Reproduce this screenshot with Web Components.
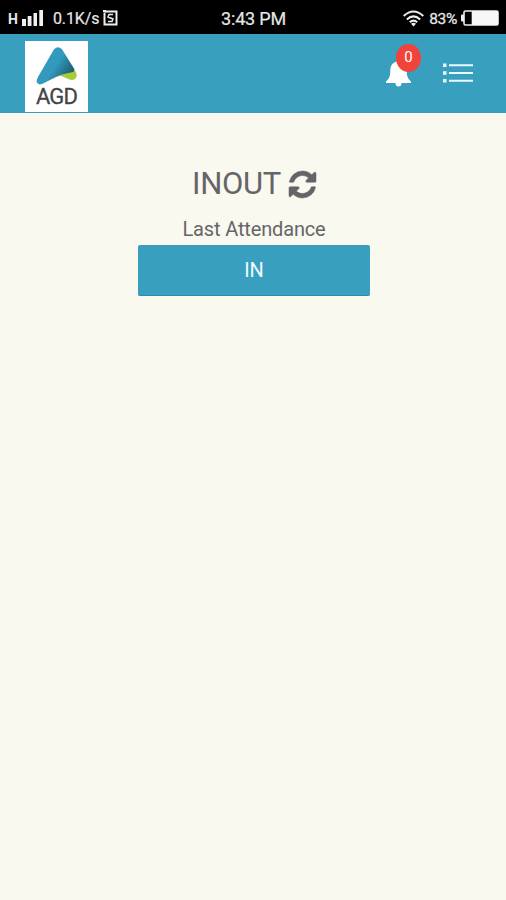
<!DOCTYPE html>
<html lang="en">
<head>
<meta charset="utf-8">
<meta name="viewport" content="width=device-width, initial-scale=1">
<title>INOUT</title>
<style>
  :root {
    --brand: #389fbe;
    --page: #faf9f0;
    --ink: #656568;
  }
  body {
    margin: 0;
    background: var(--page);
    font-family: Roboto, "Liberation Sans", sans-serif;
  }
</style>
</head>
<body>
<attendance-app>
  <status-bar slot="status" speed="0.1K/s" time="3:43 PM" battery="83%"></status-bar>
  <app-header slot="header" count="0">AGD</app-header>
  <attendance-panel label="Last Attendance" action="IN">INOUT</attendance-panel>
</attendance-app>

<script>
class AttendanceApp extends HTMLElement {
  constructor() {
    super();
    this.attachShadow({ mode: 'open' });
    this.shadowRoot.innerHTML = /* html */ `
      <style>
        :host {
          display: flex;
          flex-direction: column;
          min-height: 100vh;
          background: var(--page);
        }
        main { flex: 1; }
      </style>
      <slot name="status"></slot>
      <slot name="header"></slot>
      <main><slot></slot></main>
    `;
  }
}

const STATUS_STYLE = /* css */ `
  :host {
    display: grid;
    grid-template-columns: 1fr auto 1fr;
    align-items: center;
    height: 34px;
    padding: 2px 7px 0 8px;
    box-sizing: border-box;
    background: #000;
    color: #e6e6e6;
    font-size: 16px;
    line-height: 20px;
    white-space: nowrap;
  }
  .side { display: flex; align-items: center; }
  .right { justify-content: flex-end; }
  .net { font-size: 14px; font-weight: 700; padding-top: 2px; }
  .bars { margin: 0 10px 0 4px; }
  .speed { letter-spacing: -0.1px; margin-right: 4px; padding-top: 1px; -webkit-text-stroke: 0.2px; }
  .time { font-size: 18px; letter-spacing: -0.2px; padding-top: 1px; -webkit-text-stroke: 0.2px; }
  .wifi { margin-right: 5px; }
  .battery { font-size: 15.5px; letter-spacing: -0.3px; margin-right: 4px; padding-top: 1px; -webkit-text-stroke: 0.3px; }
  svg { display: block; flex: none; }
`;

class StatusBar extends HTMLElement {
  constructor() {
    super();
    this.attachShadow({ mode: 'open' });
    this.shadowRoot.innerHTML = /* html */ `
      <style>${STATUS_STYLE}</style>
      <div class="side">
        <span class="net">H</span>
        <svg class="bars" width="21" height="16" viewBox="0 0 21 16" fill="#f0f0f0">
          <path d="M0 9h4v7H0zM5.700 6h3.800v10H5.700zM11.500 3H15v13h-3.500zM17.300 0H21v16h-3.700z"/>
        </svg>
        <span class="speed"></span>
        <svg width="15" height="16" viewBox="0 0 15 16" fill="none" stroke="#eee">
          <path d="M2 1.500h11.500v13H1.500V2.500" stroke-width="2"/>
          <path d="M0 1h3" stroke-width="2"/>
          <path d="M10 4.500H6L5 7l5 2-1 2.500H5" stroke-width="1.500"/>
        </svg>
      </div>
      <span class="time"></span>
      <div class="side right">
        <svg class="wifi" width="21" height="17" viewBox="0 0 21 17" fill="none" stroke="#eee" stroke-width="2">
          <path d="M.7 6Q10.500-3 20.300 6M3.800 9.400Q10.500 3.300 17.200 9.400M6.800 12.300Q10.500 9 14.200 12.300"/>
          <path d="M8 13.700Q10.500 11.700 13 13.700L10.500 16.500z" fill="#eee" stroke="none"/>
        </svg>
        <span class="battery"></span>
        <svg width="38" height="16" viewBox="0 0 38 16">
          <path d="M3 4.500H1Q0 4.500 0 5.500v5q0 1 1 1h2z" fill="#eee"/>
          <rect x="3" y="1" width="34" height="14" rx="1.500" fill="none" stroke="#eee" stroke-width="1.600"/>
          <path d="M10.700 1H37v14H10.700z" fill="#f7f7f7"/>
        </svg>
      </div>
    `;
  }

  connectedCallback() {
    for (const name of ['speed', 'time', 'battery']) {
      this.shadowRoot.querySelector('.' + name).textContent = this.getAttribute(name) || '';
    }
  }
}

const HEADER_STYLE = /* css */ `
  :host {
    display: flex;
    align-items: flex-start;
    justify-content: space-between;
    height: 79px;
    padding: 7px 33px 0 25px;
    box-sizing: border-box;
    background: var(--brand);
  }
  .logo {
    display: flex;
    flex-direction: column;
    align-items: center;
    width: 63px;
    height: 71px;
    padding-top: 6px;
    box-sizing: border-box;
    background: #fff;
    color: #454547;
    font-size: 22px;
    line-height: 26px;
    letter-spacing: -0.9px;
    -webkit-text-stroke: 0.3px;
  }
  .logo svg { margin-bottom: -1px; }
  .tools { display: flex; gap: 32px; padding-top: 18px; }
  .bell { position: relative; width: 25px; height: 28px; }
  .badge {
    position: absolute;
    left: 10px;
    top: -15px;
    width: 25px;
    height: 28px;
    border-radius: 50%;
    background: #f0433a;
    color: #fff;
    font-size: 15px;
    line-height: 27px;
    text-align: center;
  }
  .menu { margin-top: 4px; }
  svg { display: block; }
`;

class AppHeader extends HTMLElement {
  constructor() {
    super();
    this.attachShadow({ mode: 'open' });
    this.shadowRoot.innerHTML = /* html */ `
      <style>${HEADER_STYLE}</style>
      <div class="logo">
        <svg width="41" height="38" viewBox="0 0 41 38">
          <defs>
            <linearGradient id="peak" gradientUnits="userSpaceOnUse" x1="21" y1="16" x2="36" y2="26">
              <stop offset="0" stop-color="#329bbd"/>
              <stop offset="1" stop-color="#1f5a70"/>
            </linearGradient>
          </defs>
          <path d="M24 28.500L37.500 22Q41.500 25.500 40.500 29.500Q39 34 33.500 32.500Z" fill="#a6cc38"/>
          <path d="M18 2.300Q22-2 26 2.300L38 21.500Q39.500 25 34.500 25.500Q27 26.500 20 30L6 37Q2 38.500 .7 35Q.3 33 2 30Z" fill="url(#peak)"/>
        </svg>
        <slot></slot>
      </div>
      <div class="tools">
        <div class="bell">
          <svg width="25" height="28" viewBox="0 0 25 28" fill="#fff">
            <path d="M10.500 2.500a2 2 0 0 1 4 0C19 4 20.700 7 20.700 11.500C20.700 17.500 22 20 25 22.500V24H0v-1.500C3 20 4.300 17.500 4.300 11.500C4.300 7 6 4 10.500 2.500zM9.500 24h6a3 3.500 0 0 1-6 0z"/>
          </svg>
          <span class="badge"></span>
        </div>
        <svg class="menu" width="30" height="20" viewBox="0 0 30 20" fill="#e9fbff">
          <path d="M0 .5h3.500V4H0zM0 8.300h3.500v3.500H0zM0 16h3.500v3.500H0zM6 1.300h24v2H6zM6 9h24v2H6zM6 16.800h24v2H6z"/>
        </svg>
      </div>
    `;
  }

  connectedCallback() {
    this.shadowRoot.querySelector('.badge').textContent = this.getAttribute('count') || '0';
  }
}

const PANEL_STYLE = /* css */ `
  :host {
    display: flex;
    flex-direction: column;
    align-items: center;
    padding: 52px 0 0 2px;
    color: var(--ink);
  }
  h1 {
    display: flex;
    align-items: center;
    gap: 8px;
    margin: 0;
    font-size: 31px;
    font-weight: 400;
    line-height: 38px;
    letter-spacing: -0.3px;
  }
  h1 svg { overflow: visible; }
  .label {
    margin: 14px 0 4px;
    font-size: 20px;
    line-height: 24px;
    letter-spacing: -0.15px;
  }
  button {
    width: 232px;
    height: 51px;
    padding: 0 0 1px;
    border: 0;
    border-bottom: 1px solid #2b8dac;
    border-radius: 2px;
    background: var(--brand);
    color: #eefaff;
    font: 400 20px Roboto, "Liberation Sans", sans-serif;
  }
`;

class AttendancePanel extends HTMLElement {
  constructor() {
    super();
    this.attachShadow({ mode: 'open' });
    this.shadowRoot.innerHTML = /* html */ `
      <style>${PANEL_STYLE}</style>
      <h1>
        <slot></slot>
        <svg width="27" height="27" viewBox="0 0 1536 1536" fill="currentColor" stroke="currentColor" stroke-width="30">
          <path d="M1511 928q0 5-1 7-64 268-268 434.500t-478 166.500q-146 0-282.500-55t-243.500-157l-129 129q-19 19-45 19t-45-19-19-45v-448q0-26 19-45t45-19h448q26 0 45 19t19 45-19 45l-137 137q71 66 161 102t187 36q134 0 250-65t186-179q11-17 53-117 8-23 30-23h192q13 0 22.500 9.500t9.500 22.500zm25-800v448q0 26-19 45t-45 19h-448q-26 0-45-19t-19-45 19-45l138-138q-148-137-349-137-134 0-250 65t-186 179q-11 17-53 117-8 23-30 23h-199q-13 0-22.500-9.500t-9.500-22.500v-7q65-268 270-434.500t480-166.500q146 0 284 55.500t245 156.500l130-129q19-19 45-19t45 19 19 45z"/>
        </svg>
      </h1>
      <div class="label"></div>
      <button type="button"></button>
    `;
  }

  connectedCallback() {
    this.shadowRoot.querySelector('.label').textContent = this.getAttribute('label') || '';
    this.shadowRoot.querySelector('button').textContent = this.getAttribute('action') || '';
  }
}

customElements.define('attendance-app', AttendanceApp);
customElements.define('status-bar', StatusBar);
customElements.define('app-header', AppHeader);
customElements.define('attendance-panel', AttendancePanel);
</script>
</body>
</html>
